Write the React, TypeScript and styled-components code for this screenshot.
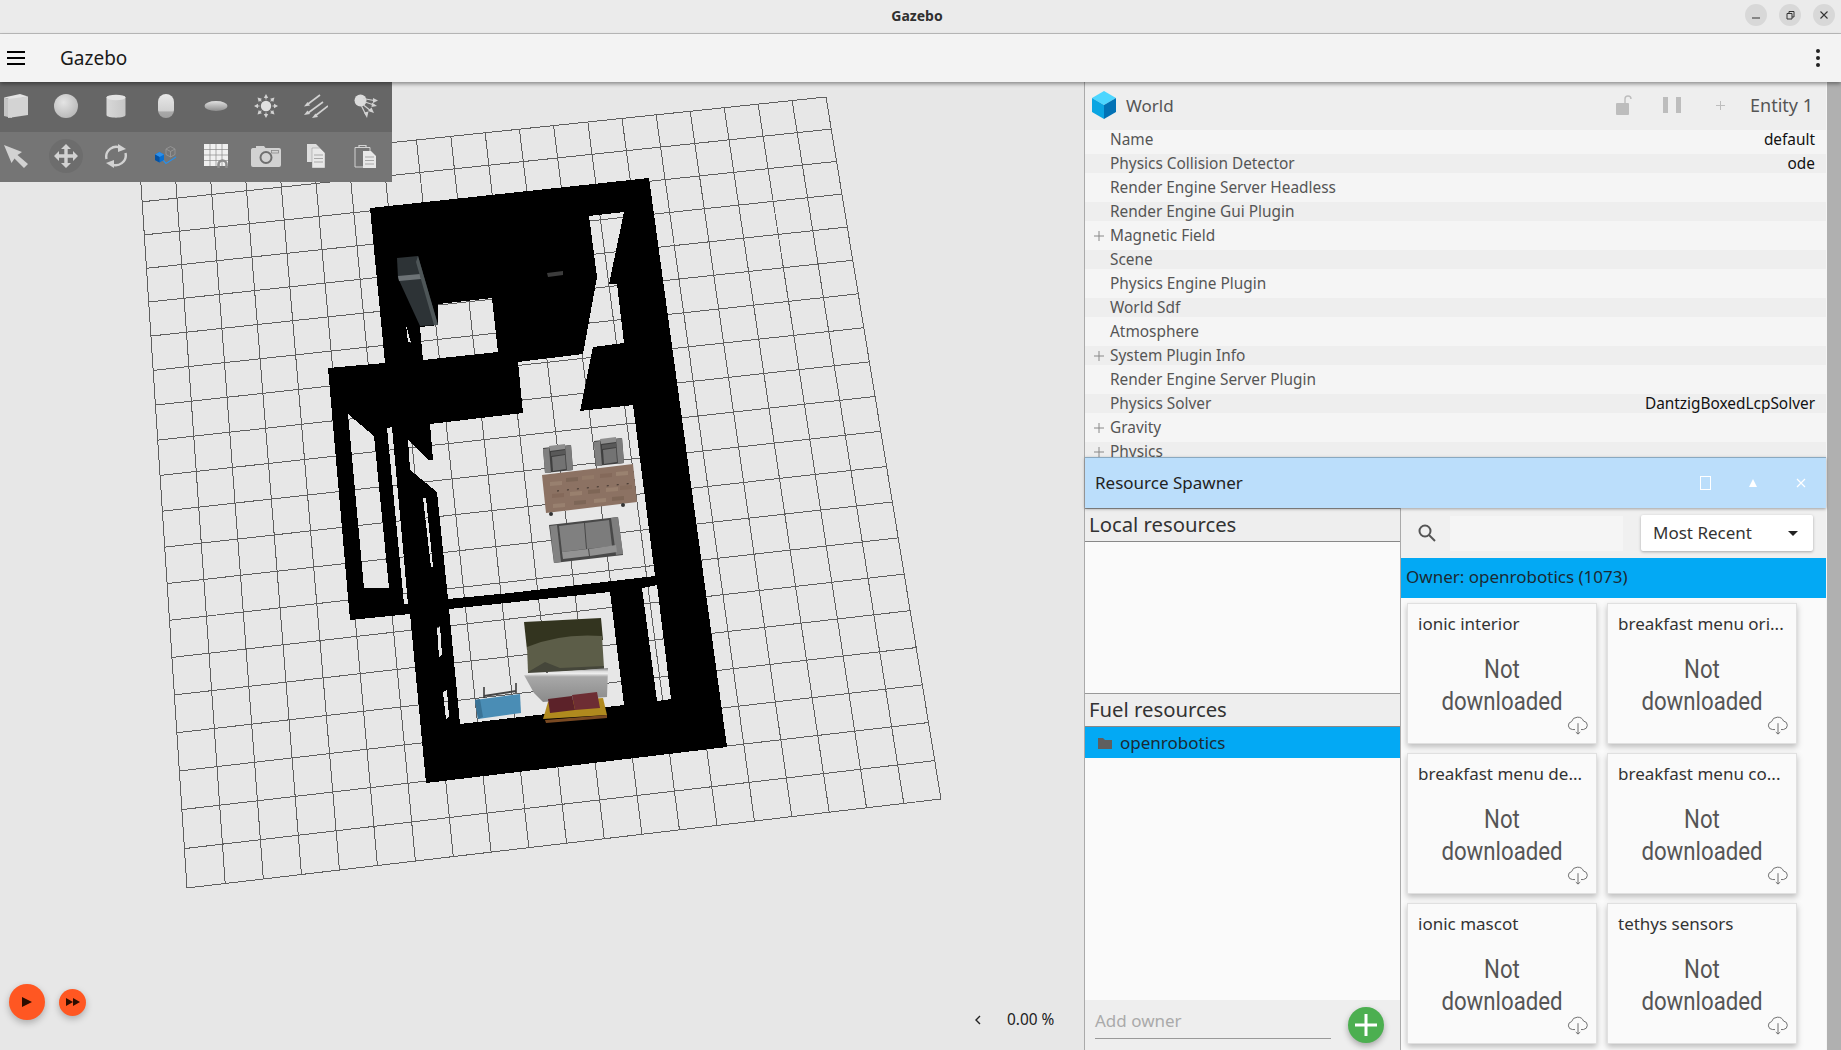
import React from "react";
import styled, { createGlobalStyle } from "styled-components";

const Global = createGlobalStyle`
  html, body { margin: 0; padding: 0; width: 100%; height: 100%; overflow: hidden; background: #e7e7e7; }
  #root { width: 1841px; height: 1050px; }
  * { box-sizing: border-box; }
  body { font-family: "Noto Sans", "DejaVu Sans", sans-serif; }
`;

const Page = styled.div`
  width: 1841px; height: 1050px; display: flex; flex-direction: column; overflow: hidden;
`;
const TitleBar = styled.header`
  height: 34px; flex: none; background: #ebebeb; border-bottom: 1px solid #bdbdbd;
  display: flex; align-items: center; justify-content: center; position: relative;
  font-size: 14px; font-weight: 700; color: #303030; padding: 0 7px 3px 0;
`;
const WindowButtons = styled.div`
  position: absolute; right: 6px; top: 4px; display: flex; gap: 12px;
`;
const WindowButton = styled.div`
  width: 22px; height: 22px; border-radius: 50%; background: #d8d8d8; display: flex; align-items: center; justify-content: center;
`;
const AppBar = styled.div`
  height: 48px; flex: none; background: #f3f3f3; display: flex; align-items: center; padding: 0 0 0 7px;
  position: relative; z-index: 3; box-shadow: 0 2px 4px rgba(0,0,0,.4);
`;
const AppTitle = styled.div`
  font-size: 19px; color: #1a1a1a; margin-left: 35px; flex: 1; padding-bottom: 1px;
`;
const Main = styled.div`
  flex: 1; display: flex; min-height: 0;
`;
const Viewport = styled.div`
  width: 1084px; flex: none; position: relative; background: #e7e7e7; overflow: hidden;
`;
const SceneSvg = styled.svg`
  position: absolute; left: 0; top: 0;
`;
const Tools = styled.div`
  position: absolute; left: 0; top: 0; width: 392px;
`;
const ToolRow = styled.div<{ $shade: string }>`
  height: 50px; background: ${(p) => p.$shade}; display: flex; align-items: center; gap: 26px; padding: 0 0 2px 4px;
`;
const ToolCell = styled.div`
  width: 24px; height: 24px; position: relative; flex: none;
  svg { display: block; position: relative; }
`;
const ToolSelected = styled.div`
  position: absolute; left: -5px; top: -5px; width: 34px; height: 34px; border-radius: 50%; background: #6d6d6d;
`;
const PlayDock = styled.div`
  position: absolute; left: 9px; top: 902px; display: flex; align-items: center; gap: 14px;
`;
const RoundButton = styled.div<{ $size: number }>`
  width: ${(p) => p.$size}px; height: ${(p) => p.$size}px; border-radius: 50%; background: #ff5722;
  display: flex; align-items: center; justify-content: center; box-shadow: 0 3px 7px rgba(0,0,0,.25);
`;
const Stats = styled.div`
  position: absolute; left: 974px; top: 927px; display: flex; align-items: center; gap: 25px; font-size: 15.4px; color: #222;
`;
const Side = styled.aside`
  flex: 1; border-left: 1px solid #aaa; display: flex; background: #f5f5f5; min-width: 0;
`;
const SideMain = styled.div`
  width: 741px; flex: none; display: flex; flex-direction: column;
`;
const Scrollbar = styled.div`
  width: 14px; margin-left: auto; background: #b0b0b0;
`;
const Inspector = styled.section`
  height: 375px; flex: none; overflow: hidden; background: #f5f5f5;
`;
const WorldHead = styled.div`
  height: 48px; background: #eeeeee; display: flex; align-items: center; padding: 0 0 2px 7px; font-size: 17px; color: #555;
`;
const WorldName = styled.div`
  margin-left: 10px; flex: 1;
`;
const EntityId = styled.div`
  margin: 0 13px 0 6px; font-size: 18px;
`;
const HeadIcon = styled.div`
  width: 48px; display: flex; justify-content: center; align-items: center;
`;
const PropRow = styled.div<{ $alt: boolean }>`
  height: 19px; margin-bottom: 5px; display: flex; align-items: center; justify-content: space-between;
  padding: 0 11px 1px 25px; font-size: 15.4px; position: relative; color: #555;
  background: ${(p) => (p.$alt ? "#eeeeee" : "transparent")};
`;
const Expand = styled.span`
  position: absolute; left: 9px; top: 50%; transform: translateY(-50%); width: 10px; height: 10px; display: flex;
`;
const PropValue = styled.span`
  color: #111;
`;
const SpawnerHead = styled.div`
  height: 51px; flex: none; background: #bbdefb; border-top: 1px solid #8aa9c0; display: flex; align-items: center;
  padding: 0 1px 1px 10px; font-size: 17px; color: #222; box-shadow: 0 1px 3px rgba(0,0,0,.35); position: relative; z-index: 1;
`;
const SpawnerTitle = styled.div`
  flex: 1;
`;
const HeadControl = styled.div`
  width: 48px; display: flex; justify-content: center; color: #fff; font-size: 12px;
`;
const Spawner = styled.div`
  flex: 1; display: flex; min-height: 0; background: #fafafa;
`;
const LeftCol = styled.div`
  width: 316px; flex: none; border-right: 1px solid #aaa; display: flex; flex-direction: column;
`;
const SectionHead = styled.div`
  height: 34px; flex: none; background: #eeeeee; border-top: 1px solid #999; border-bottom: 1px solid #888;
  font-size: 20.3px; color: #333; padding: 0 0 2px 4px; display: flex; align-items: center;
`;
const LocalList = styled.div`
  height: 151px; flex: none; background: #fafafa;
`;
const OwnerItem = styled.div`
  height: 31px; flex: none; background: #03a9f4; display: flex; align-items: center; padding-left: 13px; gap: 8px; font-size: 17px; color: #1b2a33;
`;
const Spacer = styled.div`
  flex: 1; background: #fafafa;
`;
const AddBar = styled.div`
  height: 50px; flex: none; background: #eeeeee; display: flex; align-items: flex-start;
`;
const AddField = styled.div`
  width: 236px; height: 39px; margin-left: 10px; border-bottom: 1px solid #999; display: flex; align-items: center; padding-top: 2px;
  font-size: 17px; color: #aaa;
`;
const AddButton = styled.div`
  width: 36px; height: 36px; margin: 7px 0 0 17px; border-radius: 50%; background: #4caf50;
  display: flex; align-items: center; justify-content: center; box-shadow: 0 3px 6px rgba(0,0,0,.3);
`;
const RightCol = styled.div`
  flex: 1; display: flex; flex-direction: column; min-width: 0;
`;
const SearchBar = styled.div`
  height: 50px; flex: none; background: #f0f0f0; display: flex; align-items: center; padding-left: 16px; position: relative;
`;
const SearchInput = styled.div`
  width: 173px; height: 35px; margin-left: 13px; background: #f5f5f5;
`;
const Combo = styled.div`
  width: 172px; height: 36px; margin-left: 18px; background: #fff; border-radius: 2px; box-shadow: 0 1px 3px rgba(0,0,0,.3);
  display: flex; align-items: center; justify-content: space-between; padding: 0 15px 2px 12px; font-size: 17px; color: #333;
`;
const Caret = styled.span`
  width: 0; height: 0; border-left: 5px solid transparent; border-right: 5px solid transparent; border-top: 5px solid #222; margin-top: 2px;
`;
const OwnerBar = styled.div`
  height: 40px; flex: none; background: #03a9f4; display: flex; align-items: center; padding: 0 0 4px 5px; font-size: 17px; color: #1b2a33;
`;
const CardGrid = styled.div`
  display: grid; grid-template-columns: 190px 190px; grid-auto-rows: 141px; gap: 9px 10px; padding: 5px 0 0 6px;
`;
const Card = styled.article`
  background: #fafafa; border: 1px solid #e0e0e0; box-shadow: 0 3px 6px rgba(0,0,0,.25); position: relative; padding: 9px 10px 0 10px;
`;
const CardTitle = styled.div`
  font-size: 17px; line-height: 22px; color: #333; white-space: nowrap;
`;
const CardBody = styled.div`
  margin-top: 18px; text-align: center; font-family: Roboto, "Noto Sans", sans-serif; font-size: 26px; line-height: 32px; color: #555; transform: scaleX(.855);
`;
const CloudBadge = styled.div`
  position: absolute; right: 7px; bottom: 8px; width: 22px; height: 20px;
`;

const rows: [string, string, boolean][] = [
  ["Name", "default", false],
  ["Physics Collision Detector", "ode", false],
  ["Render Engine Server Headless", "", false],
  ["Render Engine Gui Plugin", "", false],
  ["Magnetic Field", "", true],
  ["Scene", "", false],
  ["Physics Engine Plugin", "", false],
  ["World Sdf", "", false],
  ["Atmosphere", "", false],
  ["System Plugin Info", "", true],
  ["Render Engine Server Plugin", "", false],
  ["Physics Solver", "DantzigBoxedLcpSolver", false],
  ["Gravity", "", true],
  ["Physics", "", true],
];

const cards = ["ionic interior", "breakfast menu ori...", "breakfast menu de...", "breakfast menu co...", "ionic mascot", "tethys sensors"];

type P = [number, number];
const TL: P = [140, 169], TR: P = [826, 97], BR: P = [941, 799], BL: P = [187, 888];

function homography() {
  const [x0, y0] = TL, [x1, y1] = TR, [x2, y2] = BR, [x3, y3] = BL;
  const dx1 = x1 - x2, dx2 = x3 - x2, sx = x0 - x1 + x2 - x3;
  const dy1 = y1 - y2, dy2 = y3 - y2, sy = y0 - y1 + y2 - y3;
  const det = dx1 * dy2 - dx2 * dy1;
  const g = (sx * dy2 - dx2 * sy) / det, h = (dx1 * sy - sx * dy1) / det;
  const a = x1 - x0 + g * x1, b = x3 - x0 + h * x3, d = y1 - y0 + g * y1, e = y3 - y0 + h * y3;
  return (u: number, v: number): P => {
    const w = g * u + h * v + 1;
    return [(a * u + b * v + x0) / w, (d * u + e * v + y0) / w];
  };
}

function gridPath() {
  const m = homography();
  let d = "";
  for (let i = 0; i <= 20; i++) {
    const t = i / 20;
    const a = m(t, 0), b = m(t, 1), c = m(0, t), e = m(1, t);
    d += `M${a[0]} ${a[1]}L${b[0]} ${b[1]}M${c[0]} ${c[1]}L${e[0]} ${e[1]}`;
  }
  return d;
}

const poly = (pts: number[]) => "M" + pts.join(" ").replace(/(\S+ \S+) /g, "$1L") + "Z";

const outer = [370,208, 649,178, 727,747, 426,783, 410,614, 350,620, 328,368, 385,363];
const holes = [
  [589,216, 624,212, 609,284, 617,284, 624,343, 593,347, 580,411, 633,405, 655,576, 510,593, 448,599, 437,492, 410,470, 408,439, 428,460, 433,460, 430,424, 523,413, 518,362, 583,354, 597,277],
  [438,304, 492,298, 498,352, 423,360, 420,327, 438,325],
  [348,414, 374,436, 389,588, 364,588],
  [387,428, 392,427, 408,604, 404,604],
  [423,498, 426,498, 433,567, 431,567],
  [449,609, 610,592, 624,705, 460,724],
  [642,588, 657,585, 671,699, 657,701],
  [437,627, 440,626, 442,655, 439,657],
  [443,692, 447,690, 449,717, 446,719],
  [406,325, 411,343, 408,342],
];
const blackPath = poly(outer) + holes.map(poly).join("");

const Q = ({ p, f }: { p: number[]; f: string }) => <polygon points={p.join(" ")} fill={f} />;

const Armchair = ({ x, y }: { x: number; y: number }) => (
  <g transform={`translate(${x} ${y})`}>
    <Q p={[0,3, 28,0, 30,25, 2,28]} f="#3f3f3f" />
    <Q p={[0,4, 6,3, 8,28, 2,28]} f="#808080" />
    <Q p={[22,1, 28,0, 30,25, 24,26]} f="#7c7c7c" />
    <Q p={[6,1, 22,-1, 22,4, 7,6]} f="#8e8e8e" />
    <Q p={[8,7, 22,5, 23,9, 8,11]} f="#595959" />
    <Q p={[9,12, 22,10, 23,24, 10,26]} f="#737373" />
  </g>
);

const woodPatches: [number, number, string][] = [
  [550,482,"#98806f"],[566,478,"#7d6657"],[582,476,"#937a68"],[600,474,"#84695a"],[616,472,"#9a8270"],
  [552,494,"#84695a"],[570,492,"#99806e"],[588,490,"#7e6656"],[606,488,"#987f6d"],[620,486,"#866c5c"],
  [553,504,"#98806f"],[574,501,"#7d6657"],[594,499,"#9a8270"],[612,497,"#7e6656"],
];

const Scene = () => (
  <SceneSvg width={1084} height={968} viewBox="0 82 1084 968">
    <defs>
      <linearGradient id="silver" x1="0" y1="0" x2="0" y2="1">
        <stop offset="0" stopColor="#7a7a7a" />
        <stop offset=".1" stopColor="#dcdcdc" />
        <stop offset=".16" stopColor="#eeeeee" />
        <stop offset=".26" stopColor="#a8a8a8" />
        <stop offset="1" stopColor="#8a8a8a" />
      </linearGradient>
    </defs>
    <path d={gridPath()} stroke="#5f5f5f" strokeWidth="1" fill="none" shapeRendering="crispEdges" />
    <path d={blackPath} fill="#000" fillRule="evenodd" shapeRendering="crispEdges" />
    {/* wardrobe */}
    <Q p={[397,258, 418,256, 438,325, 420,326, 398,278]} f="#2d3336" />
    <Q p={[398,276, 420,274, 421,279, 399,281]} f="#6d7376" />
    <Q p={[418,256, 438,325, 434,325, 416,262]} f="#4e5658" />
    <Q p={[547,273, 563,271, 563,275, 548,277]} f="#3c3c3c" />
    {/* living room */}
    <Armchair x={543} y={445} />
    <Armchair x={594} y={438} />
    <Q p={[542,475, 633,464, 637,502, 546,513]} f="#8c7263" />
    {woodPatches.map(([x, y, c]) => <Q key={`${x}-${y}`} p={[x,y, x+12,y-1, x+12,y+3, x,y+4]} f={c} />)}
    <path d="M557 491L635 483" stroke="#3a2f28" strokeWidth="1" strokeDasharray="2 8" />
    <circle cx="551" cy="514" r="2" fill="#333" />
    <circle cx="623" cy="505" r="2" fill="#333" />
    <Q p={[549,525, 618,517, 623,555, 554,563]} f="#484848" />
    <Q p={[550,526, 557,525, 561,562, 554,563]} f="#828282" />
    <Q p={[611,518, 618,517, 623,554, 616,555]} f="#7e7e7e" />
    <Q p={[559,526, 584,523, 586,549, 562,552]} f="#808080" />
    <Q p={[585,523, 609,520, 612,546, 587,549]} f="#7c7c7c" />
    <Q p={[562,552, 588,549, 589,556, 563,559]} f="#939393" />
    <Q p={[589,549, 616,545, 617,552, 590,556]} f="#919191" />
    {/* bedroom */}
    <Q p={[524,622, 601,618, 603,640, 527,650]} f="#33341f" />
    <path d="M527 647Q560 633 602 636L604 668L528 672Z" fill="#5c5d48" />
    <path d="M528 672L545 662L560 668L604 666L604 669L528 673Z" fill="#45463a" />
    <path d="M524 675L608 668L607 697L543 702L534 693Z" fill="url(#silver)" />
    <Q p={[548,702, 603,698, 607,715, 543,719]} f="#b08a1e" />
    <Q p={[548,699, 572,696, 575,710, 550,713]} f="#5c2229" />
    <Q p={[572,695, 597,692, 600,708, 575,710]} f="#6d2d33" />
    <Q p={[545,720, 607,715, 607,718, 546,723]} f="#7a4a22" />
    <Q p={[475,700, 520,694, 521,713, 478,719]} f="#4a8db5" />
    <Q p={[475,700, 480,699, 483,717, 478,719]} f="#3a7396" />
    <path d="M484 698L484 687M516 693L516 683" stroke="#333" strokeWidth="1.5" />
    <path d="M484 696L516 691" stroke="#444" strokeWidth="2" />
  </SceneSvg>
);

const G = "#d2d2d2";

const ToolDefs = () => (
  <svg width="0" height="0" style={{ position: "absolute" }}>
    <defs>
      <radialGradient id="ball" cx=".4" cy=".35" r=".75">
        <stop offset="0" stopColor="#e4e4e4" />
        <stop offset="1" stopColor="#b4b4b4" />
      </radialGradient>
      <linearGradient id="barrel" x1="0" y1="0" x2="1" y2="0">
        <stop offset="0" stopColor="#d8d8d8" />
        <stop offset=".5" stopColor="#cfcfcf" />
        <stop offset="1" stopColor="#c6c6c6" />
      </linearGradient>
      <linearGradient id="pill" x1="0" y1="0" x2="0" y2="1">
        <stop offset="0" stopColor="#e8e8e8" />
        <stop offset=".7" stopColor="#d0d0d0" />
        <stop offset=".75" stopColor="#a8a8a8" />
        <stop offset="1" stopColor="#a0a0a0" />
      </linearGradient>
      <linearGradient id="disc" x1="0" y1="0" x2="0" y2="1">
        <stop offset="0" stopColor="#e0e0e0" />
        <stop offset="1" stopColor="#8e8e8e" />
      </linearGradient>
    </defs>
  </svg>
);

const Ico = ({ children, box = "0 0 24 24" }: { children: React.ReactNode; box?: string }) => (
  <svg width="24" height="24" viewBox={box}>{children}</svg>
);

const BoxIcon = () => (
  <Ico>
    <polygon points="0,3.5 16,0 24,2.5 8,6" fill="#e3e3e3" />
    <polygon points="0,3.5 8,6 8,24 0,22" fill="#c4c4c4" />
    <polygon points="4,5 24,2.5 24,21 4,24" fill="#d3d3d3" />
  </Ico>
);
const SphereIcon = () => <Ico><circle cx="12" cy="12" r="12" fill="url(#ball)" /></Ico>;
const CylinderIcon = () => (
  <Ico>
    <path d="M2.5 3.5C2.5 1 21.5 1 21.5 3.5V21C21.5 24.5 2.5 24.5 2.5 21Z" fill="url(#barrel)" />
    <ellipse cx="12" cy="3.5" rx="9.5" ry="2.7" fill="#e3e3e3" />
  </Ico>
);
const CapsuleIcon = () => <Ico><rect x="4" y="0" width="16" height="24" rx="8" fill="url(#pill)" /></Ico>;
const EllipsoidIcon = () => <Ico><ellipse cx="12" cy="12" rx="11.5" ry="5" fill="url(#disc)" /></Ico>;
const SunIcon = () => (
  <Ico>
    <circle cx="12" cy="12" r="5.2" fill="#e0e0e0" />
    {[0, 45, 90, 135, 180, 225, 270, 315].map((a) => (
      <g key={a} transform={`rotate(${a} 12 12)`}>
        <polygon points="12,0 9.8,4 14.2,4" fill={G} />
        <rect x="11.5" y="3" width="1" height="2.5" fill={G} />
      </g>
    ))}
  </Ico>
);
const DirectionalIcon = () => (
  <Ico>
    <g stroke={G} strokeWidth="1.6" fill={G}>
      <path d="M16 1L4 10" />
      <path d="M19 8L4 19" />
      <path d="M24 12L11 22" />
    </g>
    <polygon points="0,12.5 6,11.5 3.5,8" fill={G} />
    <polygon points="0,21 6,20 3.5,16.5" fill={G} />
    <polygon points="8,24 14,23 11.5,19.5" fill={G} />
  </Ico>
);
const SpotIcon = () => (
  <Ico>
    <circle cx="6.5" cy="6.5" r="6" fill="#dcdcdc" />
    <g stroke={G} strokeWidth="1.2">
      <path d="M9 4.5L20 6.5M11 8L20 11M9.5 11L17 17M7.5 12L12 21" />
    </g>
    <g fill={G}>
      <polygon points="24,6.5 19,4 19,9" />
      <polygon points="23,12 18,8.5 17.5,13" />
      <polygon points="20,19 14,17 17.5,13.5" />
      <polygon points="13,24 10,18.5 14.5,17.5" />
    </g>
  </Ico>
);
const SelectIcon = () => (
  <Ico><path d="M0 1L18 8L13.5 11L24 20L20 24L10.5 14.5L7.5 19Z" fill={G} /></Ico>
);
const MoveIcon = () => (
  <Ico><path d="M12 0l5 5h-3.3v5.3H19V7l5 5-5 5v-3.3h-5.3V19H17l-5 5-5-5h3.3v-5.3H5V17l-5-5 5-5v3.3h5.3V5H7z" fill={G} /></Ico>
);
const RotateIcon = () => (
  <Ico>
    <g fill="none" stroke={G} strokeWidth="2.4">
      <path d="M2.5 15A10 10 0 0 1 17 4" />
      <path d="M21.5 9A10 10 0 0 1 7 20" />
    </g>
    <polygon points="14,0 22,5 14,8" fill={G} />
    <polygon points="10,24 2,19 10,16" fill={G} />
  </Ico>
);
const ModelIcon = () => (
  <Ico>
    <g fill="none" stroke="#9a9a9a" strokeWidth=".8">
      <path d="M12 5L16.5 2.5L21 5V10.5L16.5 13L12 10.5Z" />
      <path d="M12 5L16.5 7.5L21 5M16.5 7.5V13" />
    </g>
    <path d="M9 16L12 19.5L22 13" fill="none" stroke="#2a8fe6" strokeWidth="1.3" />
    <polygon points="1,10.5 5.5,8 10,10.5 10,16 5.5,18.5 1,16" fill="#0a6fd0" />
    <polygon points="1,10.5 5.5,8 10,10.5 5.5,13" fill="#2f8fe8" />
    <polygon points="1,10.5 5.5,13 5.5,18.5 1,16" fill="#0651a0" />
  </Ico>
);
const GridIcon = () => (
  <Ico>
    <rect x="0" y="0" width="24" height="22" fill="#f0f0f0" />
    <g stroke="#8a8a8a" strokeWidth=".7">
      <path d="M6 0V22M12 0V22M18 0V22M0 5.5H24M0 11H24M0 16.5H24" />
    </g>
    <path d="M14.5 24V20.5a4 4 0 0 1 8 0V24" fill="none" stroke="#8d8d8d" strokeWidth="2.6" />
  </Ico>
);
const CameraIcon = () => (
  <svg width="30" height="24" viewBox="0 0 30 24" style={{ left: -3 }}>
    <path d="M1.5 4H5V2h8l1.5 2H28a2 2 0 0 1 2 2v15a2 2 0 0 1-2 2H2a2 2 0 0 1-2-2V6a2 2 0 0 1 1.5-2Z" fill={G} />
    <circle cx="15" cy="13.5" r="5.5" fill="none" stroke="#6f6f6f" strokeWidth="2" />
    <rect x="20.5" y="6.5" width="7" height="2.5" fill="none" stroke="#8a8a8a" strokeWidth=".8" />
  </svg>
);
const CopyIcon = () => (
  <Ico>
    <path d="M3 0H12L16 4V18H3Z" fill="#dedede" />
    <path d="M8 4H16L21 9V24H8Z" fill="#e8e8e8" stroke="#7a7a7a" strokeWidth=".4" />
    <path d="M10 11H19M10 14.5H19M10 18H19" stroke="#a8a8a8" strokeWidth="1.1" />
  </Ico>
);
const PasteIcon = () => (
  <Ico>
    <path d="M1 3.5H16V23H1Z" fill="none" stroke={G} strokeWidth="1" />
    <path d="M5 3.5V1.5H12V3.5" fill="none" stroke={G} strokeWidth="1.2" />
    <path d="M9 7H17L22 12V24H9Z" fill="#e8e8e8" />
    <path d="M11 13H20M11 16.5H20M11 20H20" stroke="#a8a8a8" strokeWidth="1.1" />
  </Ico>
);

const topTools = [BoxIcon, SphereIcon, CylinderIcon, CapsuleIcon, EllipsoidIcon, SunIcon, DirectionalIcon, SpotIcon];
const bottomTools = [SelectIcon, MoveIcon, RotateIcon, ModelIcon, GridIcon, CameraIcon, CopyIcon, PasteIcon];

const CloudIcon = () => (
  <svg width="22" height="20" viewBox="0 0 22 22" preserveAspectRatio="none" fill="none" stroke="#6a6a6a" strokeWidth="1">
    <path d="M8 16H5.5A4.5 4.5 0 0 1 4.6 7.2 6.2 6.2 0 0 1 16.5 6.6 4.8 4.8 0 0 1 16.5 16H14" />
    <path d="M11 9V21M8.8 18.8L11 21L13.2 18.8" />
  </svg>
);

export default function App() {
  return (
    <Page>
      <Global />
      <ToolDefs />
      <TitleBar>
        Gazebo
        <WindowButtons>
          <WindowButton>
            <svg width="10" height="10" viewBox="0 0 10 10"><path d="M1 8H9" stroke="#333" strokeWidth="1" /></svg>
          </WindowButton>
          <WindowButton>
            <svg width="10" height="10" viewBox="0 0 10 10" fill="none" stroke="#333" strokeWidth="1"><path d="M2 3.5H7V9H2ZM4 3.5V1.5H9V7H7" /></svg>
          </WindowButton>
          <WindowButton>
            <svg width="10" height="10" viewBox="0 0 10 10"><path d="M1.5 1.5L8.5 8.5M8.5 1.5L1.5 8.5" stroke="#333" strokeWidth="1.1" /></svg>
          </WindowButton>
        </WindowButtons>
      </TitleBar>
      <AppBar>
        <svg width="18" height="14" viewBox="0 0 18 14"><path d="M0 1H18M0 7H18M0 13H18" stroke="#000" strokeWidth="2" /></svg>
        <AppTitle>Gazebo</AppTitle>
        <svg width="20" height="20" viewBox="0 0 20 20" style={{ marginRight: 13 }}><circle cx="10" cy="3" r="2" fill="#222" /><circle cx="10" cy="10" r="2" fill="#222" /><circle cx="10" cy="17" r="2" fill="#222" /></svg>
      </AppBar>
      <Main>
        <Viewport>
          <Scene />
          <Tools>
            <ToolRow $shade="#666666">
              {topTools.map((I, i) => <ToolCell key={i}><I /></ToolCell>)}
            </ToolRow>
            <ToolRow $shade="#757575">
              {bottomTools.map((I, i) => (
                <ToolCell key={i}>
                  {i === 1 && <ToolSelected />}
                  <I />
                </ToolCell>
              ))}
            </ToolRow>
          </Tools>
          <PlayDock>
            <RoundButton $size={36}>
              <svg width="12" height="12" viewBox="0 0 12 12"><polygon points="1,1 11,6 1,11" fill="#2b0d00" /></svg>
            </RoundButton>
            <RoundButton $size={27}>
              <svg width="14" height="8" viewBox="0 0 14 8"><polygon points="0,0 7,4 0,8" fill="#2b0d00" /><polygon points="7,0 14,4 7,8" fill="#2b0d00" /></svg>
            </RoundButton>
          </PlayDock>
          <Stats>
            <svg width="8" height="10" viewBox="0 0 8 10"><path d="M6 1L2 5L6 9" fill="none" stroke="#222" strokeWidth="1.4" /></svg>
            <span>0.00 %</span>
          </Stats>
        </Viewport>
        <Side>
          <SideMain>
            <Inspector>
              <WorldHead>
                <svg width="24" height="28" viewBox="0 0 24 28">
                  <polygon points="12,0 24,7 12,14 0,7" fill="#4dd6ff" />
                  <polygon points="0,7 12,14 12,28 0,21" fill="#0ba5e2" />
                  <polygon points="24,7 12,14 12,28 24,21" fill="#0372b5" />
                </svg>
                <WorldName>World</WorldName>
                <HeadIcon>
                  <svg width="16" height="20" viewBox="0 0 16 20"><rect x="0" y="8" width="13" height="12" rx="1" fill="#bdbdbd" /><path d="M9 8V4a3 3 0 0 1 6 0" fill="none" stroke="#bdbdbd" strokeWidth="1.4" /></svg>
                </HeadIcon>
                <HeadIcon>
                  <svg width="18" height="16" viewBox="0 0 18 16"><rect x="0" y="0" width="5" height="16" fill="#bdbdbd" /><rect x="13" y="0" width="5" height="16" fill="#bdbdbd" /></svg>
                </HeadIcon>
                <HeadIcon>
                  <svg width="9" height="9" viewBox="0 0 9 9"><path d="M4.5 0V9M0 4.5H9" stroke="#bdbdbd" strokeWidth="1" /></svg>
                </HeadIcon>
                <EntityId>Entity 1</EntityId>
              </WorldHead>
              {rows.map(([label, value, expandable], i) => (
                <PropRow key={label} $alt={i % 2 === 1}>
                  {expandable && (
                    <Expand>
                      <svg width="10" height="10" viewBox="0 0 10 10"><path d="M5 0V10M0 5H10" stroke="#888" strokeWidth="1" /></svg>
                    </Expand>
                  )}
                  <span>{label}</span>
                  {value && <PropValue>{value}</PropValue>}
                </PropRow>
              ))}
            </Inspector>
            <SpawnerHead>
              <SpawnerTitle>Resource Spawner</SpawnerTitle>
              <HeadControl><svg width="11" height="14" viewBox="0 0 11 14"><rect x=".5" y=".5" width="10" height="13" fill="none" stroke="#fff" /></svg></HeadControl>
              <HeadControl><svg width="8" height="8" viewBox="0 0 8 8"><polygon points="4,0 8,8 0,8" fill="#fff" /></svg></HeadControl>
              <HeadControl><svg width="10" height="10" viewBox="0 0 10 10"><path d="M1 1L9 9M9 1L1 9" stroke="#fff" strokeWidth="1.2" /></svg></HeadControl>
            </SpawnerHead>
            <Spawner>
              <LeftCol>
                <SectionHead>Local resources</SectionHead>
                <LocalList />
                <SectionHead>Fuel resources</SectionHead>
                <OwnerItem>
                  <svg width="14" height="12" viewBox="0 0 14 12"><path d="M0 1H5L7 3H14V12H0Z" fill="#5f5f5f" /></svg>
                  openrobotics
                </OwnerItem>
                <Spacer />
                <AddBar>
                  <AddField>Add owner</AddField>
                  <AddButton>
                    <svg width="24" height="24" viewBox="0 0 24 24"><path d="M12 1V23M1 12H23" stroke="#fff" strokeWidth="3" /></svg>
                  </AddButton>
                </AddBar>
              </LeftCol>
              <RightCol>
                <SearchBar>
                  <svg width="20" height="20" viewBox="0 0 20 20" fill="none" stroke="#555" strokeWidth="2"><circle cx="8" cy="8" r="5.5" /><path d="M12 12L18 18" /></svg>
                  <SearchInput />
                  <Combo>Most Recent<Caret /></Combo>
                </SearchBar>
                <OwnerBar>Owner: openrobotics (1073)</OwnerBar>
                <CardGrid>
                  {cards.map((c) => (
                    <Card key={c}>
                      <CardTitle>{c}</CardTitle>
                      <CardBody>Not<br />downloaded</CardBody>
                      <CloudBadge><CloudIcon /></CloudBadge>
                    </Card>
                  ))}
                </CardGrid>
              </RightCol>
            </Spawner>
          </SideMain>
          <Scrollbar />
        </Side>
      </Main>
    </Page>
  );
}
